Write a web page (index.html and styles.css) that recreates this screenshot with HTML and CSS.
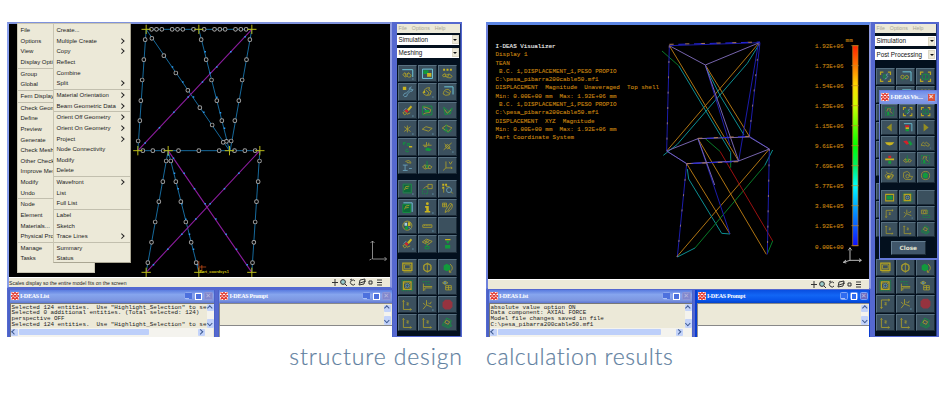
FILE: index.html
```html
<!DOCTYPE html>
<html lang="en">
<head>
<meta charset="utf-8">
<title>Structure design and calculation results</title>
<link rel="stylesheet" href="styles.css">
</head>
<body>
<svg class="defs" aria-hidden="true">
  <defs>
    <linearGradient id="scale" x1="0" y1="0" x2="0" y2="1">
      <stop offset="0" stop-color="#f20"/><stop offset=".1" stop-color="#f70"/><stop offset=".2" stop-color="#fd0"/><stop offset=".3" stop-color="#cf0"/>
      <stop offset=".5" stop-color="#0f0"/><stop offset=".6" stop-color="#0e6"/><stop offset=".7" stop-color="#0ff"/>
      <stop offset=".8" stop-color="#0af"/><stop offset="1" stop-color="#11f"/>
    </linearGradient>
  </defs>
  <g>
    <symbol id="blob" viewBox="0 0 57 54"><path class="y" d="M12 28l7-6 6 5 7-5 6 5 6 4-2 6-7 1-6-5-6 4-6-2-6 1z"/><path class="n" d="M47 46h3"/></symbol>
    <symbol id="blob-c" viewBox="0 0 57 54"><path class="y" d="M12 30l7-6 6 5 7-5 6 5 3 4-2 6-7 0-6-3-6 3zM19 24l4 12M32 24l-6 12"/><path class="c" d="M10 13h37v26"/><path class="n" d="M45 46h5"/></symbol>
    <symbol id="block" viewBox="0 0 57 54"><path class="c" d="M11 11h35v33H11z"/><path class="fg" d="M14 15h18v13H14z"/><path class="fy" d="M27 25h15v13H27z"/></symbol>
    <symbol id="dots" viewBox="0 0 57 54"><path class="fy" d="M13 10h7v7h-7zM25 10h7v7h-7zM37 10h7v7h-7z"/><path class="y" d="M11 32l8-5 7 5 8-4 11 8-5 6-9-1-9-4-8 1zM19 28l5 11M34 28l-5 11"/></symbol>
    <symbol id="wrench" viewBox="0 0 57 54"><path class="fy" d="M12 10h12v11H12z"/><path class="n" d="M43 10l-8 4 0 8-11 10-6 1-4 7 5 5 7-2 2-7 10-10 7-1 3-7"/><path class="n" d="M40 14v6h6"/></symbol>
    <symbol id="bend" viewBox="0 0 57 54"><path class="y" d="M16 27c2-11 9-14 20-14l-3 8 9 5-5 13-14 1-9-6zM22 21l12 10-6 9"/><path class="fy" d="M10 30l9-7 2 9z"/><path class="n" d="M45 46h5"/></symbol>
    <symbol id="bend-c" viewBox="0 0 57 54"><path class="c" d="M17 10h31v27"/><path class="y" d="M15 29c2-8 7-10 16-10l8 6-4 13-13 2-9-5zM21 25l14 8"/></symbol>
    <symbol id="pencil" viewBox="0 0 57 54"><path class="fy" d="M40 9l5 5-12 14-6-5z"/><path class="fr" d="M23 21l9 8-5 6-9-7z"/><path class="y" d="M12 34l8-4 6 7-8 5zM27 40l11-5"/><path class="n" d="M15 27l9-9M45 46h5"/></symbol>
    <symbol id="sheet" viewBox="0 0 57 54"><path class="g" d="M11 11h33v31H11z"/><path class="y" d="M14 14l12 2 14 7-3 10-14 2-9 4"/><path class="fg" d="M18 25h16v8H18z"/><path class="n" d="M14 18l10 6"/></symbol>
    <symbol id="tri" viewBox="0 0 57 54"><path class="g" d="M15 15l5 26 25-23-7 20-18 3M15 15l18 14 5 9"/><path class="y" d="M18 23l10 13 13-12"/></symbol>
    <symbol id="star" viewBox="0 0 57 54"><path class="y" d="M28 16v24M17 20l22 17M39 20L17 37"/><path class="n" d="M45 46h5"/></symbol>
    <symbol id="diamond" viewBox="0 0 57 54"><path class="y" d="M10 29l13-9 22 6-13 10z"/><path class="n" d="M45 46h5"/></symbol>
    <symbol id="diamond-g" viewBox="0 0 57 54"><path class="y" d="M10 25l14-10 20 9-13 13z"/><path class="g" d="M24 12v20M19 27l6 7 6-7M14 31l16 10 13-8"/></symbol>
    <symbol id="tags" viewBox="0 0 57 54"><path class="g" d="M14 22V12h8M14 17h7M28 16h8v7h-8zM30 36c-7-3-12 8-4 9h5v-4"/><path class="fy" d="M34 25h11v5H34z"/></symbol>
    <symbol id="level" viewBox="0 0 57 54"><path class="y" d="M12 22h31M16 27h11M25 11v11M33 13v9"/><path class="fg" d="M21 34l9-4 14 7-9 6-13-2z"/></symbol>
    <symbol id="cross" viewBox="0 0 57 54"><path class="y" d="M15 38l28-24M18 17l22 21M20 25l9-6 9 10-9 6z"/><path class="n" d="M45 46h5"/></symbol>
    <symbol id="beam" viewBox="0 0 57 54"><path class="y" d="M21 12l12-3 9 7M26 16l15 2"/><path class="n" d="M12 25h17M20 25v19M12 44h17M34 37h10"/></symbol>
    <symbol id="blob-g" viewBox="0 0 57 54"><path class="y" d="M11 32l8-8 8 5 7-4 10 6-5 7-10-2-9 3zM19 24l4 13M34 26l-4 10"/><path class="g" d="M27 10v24M22 26l5 7 5-7"/></symbol>
    <symbol id="axes" viewBox="0 0 57 54"><path class="y" d="M23 12v23M13 44l10-9h22M34 13l5 9 6-10M40 31l5 4-4 4"/></symbol>
    <symbol id="gmesh" viewBox="0 0 57 54"><path class="g" d="M13 11h29v31H13z"/><path class="gd" d="M16 14h23v25H16z"/><path class="y" d="M18 32l4-12 13-2M22 27l10-2"/><path class="n" d="M45 46h5"/></symbol>
    <symbol id="gmesh-c" viewBox="0 0 57 54"><path class="gd" d="M12 15h28v29H12z"/><path class="g" d="M12 15h28v29H12z"/><path class="y" d="M18 33l5-12 12-2M22 28l11-2"/><path class="c" d="M14 10h31v32"/></symbol>
    <symbol id="extract" viewBox="0 0 57 54"><path class="y" d="M30 12h15v15H30zM15 27l8-8h6"/><path class="g" stroke-dasharray="4 3" d="M11 30h18v15H11z"/><path class="n" d="M45 46h5"/></symbol>
    <symbol id="lens" viewBox="0 0 57 54"><path class="fy" d="M10 10h7v7h-7zM20 10h7v7h-7zM10 20h7v7h-7z"/><path class="y" d="M15 27v14"/><circle class="n" cx="34" cy="32" r="9"/><path class="y" d="M23 20h13M41 38l6 6"/></symbol>
    <symbol id="info" viewBox="0 0 57 54"><circle class="fy" cx="28" cy="13" r="5"/><path class="fy" d="M20 21h13v18h5v5H19v-5h5V27h-4z"/><path class="n" d="M45 46h5"/></symbol>
    <symbol id="note" viewBox="0 0 57 54"><path class="y" d="M11 11h14v13H11zM18 11v13M11 17h14M44 14L29 39l-9 5 3-10 14-22zM44 14c6 11-5 21-13 28"/></symbol>
    <symbol id="palette" viewBox="0 0 57 54"><circle class="y" cx="28" cy="27" r="16"/><path class="fn" d="M18 17h9v10h-9z"/><path class="fy" d="M30 15h9v13h-9z"/><path class="fg" d="M20 31l10-4v14H20z"/><path class="n" d="M32 31l9 9"/></symbol>
    <symbol id="ruler" viewBox="0 0 57 54"><path class="y" d="M12 24h32v9H12zM18 24v4M24 24v4M30 24v4M37 24v4"/><path class="n" d="M45 46h5"/></symbol>
    <symbol id="blank" viewBox="0 0 57 54"></symbol>
    <symbol id="fan" viewBox="0 0 57 54"><path class="y" d="M10 21l15-10 20 8-16 12zM17 17l16 8M24 25l12-9M29 12l-8 12"/><path class="g" d="M25 27v10M20 37h14v8H20z"/></symbol>
    <symbol id="funnel" viewBox="0 0 57 54"><path class="fy" d="M20 11h19v4H20z"/><path class="fg" d="M23 18h13l-6 10zM20 32h18v12H20z"/></symbol>
    <symbol id="monitor" viewBox="0 0 57 54"><path class="y2" d="M12 11h32v26H12z"/><path class="y" d="M18 17h20v14H18zM14 42h29"/></symbol>
    <symbol id="cube" viewBox="0 0 57 54"><circle class="y" cx="28" cy="27" r="13"/><path class="y" d="M28 11l13 7v17l-13 8-13-8V18zM28 11v32"/></symbol>
    <symbol id="rotate" viewBox="0 0 57 54"><path class="fg" d="M15 19l11-6 12 6v15l-12 6-11-6z"/><path class="y" d="M37 14c12 9 11 22-2 28M35 36v7h7"/></symbol>
    <symbol id="fit" viewBox="0 0 57 54"><path class="g" stroke-dasharray="4 3" d="M9 9h38v36H9z"/><path class="y2" d="M14 14h27v26H14z"/><circle class="n" cx="28" cy="27" r="6"/><path class="y" d="M15 15l8 8M40 15l-7 7M15 39l8-7M40 39l-7-7"/></symbol>
    <symbol id="corner" viewBox="0 0 57 54"><path class="g" stroke-dasharray="6 3" d="M11 13h28M22 21l18 3"/><path class="y" d="M14 20v26M19 35v9M14 30h31M19 35h26"/></symbol>
    <symbol id="eyegrid" viewBox="0 0 57 54"><path class="y" d="M11 17l9-6 10 6-10 6zM22 27h20v15H22zM32 27v15M22 34h20"/><circle class="n" cx="20" cy="17" r="3"/></symbol>
    <symbol id="axis" viewBox="0 0 57 54"><path class="y" d="M14 12v32h28M11 16l3-4 4 4M38 40l4 4-4 4M25 21h7l-6 7h7"/></symbol>
    <symbol id="axis-t" viewBox="0 0 57 54"><path class="y" d="M14 44V14h29M11 39l3 5 4-5M38 11l5 3-5 4M25 24h7l-6 7h7"/></symbol>
    <symbol id="axis3" viewBox="0 0 57 54"><path class="y" d="M25 11v17l19 8M25 28L13 43M13 21l7 7M37 25l5-8M31 20l5 5"/><path class="n" d="M45 46h5"/></symbol>
    <symbol id="stop" viewBox="0 0 57 54"><path fill="#96333f" d="M20 10h17l9 9v16l-9 9H20l-9-9V19z"/></symbol>
    <symbol id="stack" viewBox="0 0 57 54"><path class="g" d="M10 36l9-15 7-10 16 9-5 14 7 3-12 9zM14 31l20 10 3-8"/><path class="y" d="M24 18l12 6-5 9-12-6z"/></symbol>
    <symbol id="frame" viewBox="0 0 57 54"><path class="y2" d="M11 21V11h10M37 11h9v10M46 34v10h-9M21 44H11V34"/><path class="g" d="M21 21h8v11h-8z"/><path class="n" d="M38 18c-10-2-8 8 0 8M26 36l9-6"/></symbol>
    <symbol id="frame-g" viewBox="0 0 57 54"><path class="y2" d="M11 21V11h10M37 11h9v10M46 34v10h-9M21 44H11V34"/><path class="g" d="M17 22l12-5 12 5v12l-12 4-12-5zM29 18v19"/></symbol>
    <symbol id="chain" viewBox="0 0 57 54"><path class="c" d="M18 10h30v33"/><circle class="y" cx="18" cy="28" r="6"/><circle class="y" cx="33" cy="29" r="6"/><path class="g" d="M18 40l15-15"/></symbol>
    <symbol id="plot" viewBox="0 0 57 54"><path class="g" stroke-dasharray="7 3" d="M11 10h34v34H11z"/><path class="y" d="M18 16h15l-4 9 10 10M20 17l-3 10"/><path class="fg" d="M18 28h9v14h-9z"/></symbol>
    <symbol id="prev" viewBox="0 0 57 54"><path fill="#948e22" d="M37 10v34L16 27z"/></symbol>
    <symbol id="next" viewBox="0 0 57 54"><path fill="#948e22" d="M20 10v34l21-17z"/></symbol>
    <symbol id="legend" viewBox="0 0 57 54"><path class="c" d="M13 11h33v32"/><path class="fr" d="M18 18h17v8H18z"/><path class="fy" d="M20 26h14v8H20z"/><path class="fg" d="M20 34h14v9H20z"/></symbol>
    <symbol id="wing" viewBox="0 0 57 54"><path class="fy" d="M9 22h39l-9 10-11 3-12-4z"/></symbol>
    <symbol id="slab" viewBox="0 0 57 54"><path class="fr" d="M10 18l14-3 13 12-12 5z"/><path class="fg" d="M29 20l10-3 10 13-10 6z"/></symbol>
    <symbol id="bars" viewBox="0 0 57 54"><path class="fr" d="M23 11h12v10H23z"/><path class="fy" d="M10 23h37v7H10z"/><path class="fg" d="M23 32h12v13H23z"/></symbol>
    <symbol id="eyes" viewBox="0 0 57 54"><path class="y" d="M9 27l12-9 24 7-9 16H18zM21 18l-8-7M34 20l7-9"/><circle class="fy" cx="24" cy="32" r="6"/><circle class="y" cx="37" cy="29" r="5"/></symbol>
    <symbol id="boxes" viewBox="0 0 57 54"><path class="y" d="M12 15l15-5 10 8v12l12 1-6 13-24-1-8-9z"/><circle class="y" cx="28" cy="30" r="7"/></symbol>
    <symbol id="disc" viewBox="0 0 57 54"><circle class="y" cx="28" cy="27" r="17"/><path class="fg" d="M18 19l10-6 11 9-3 15-13 2-7-9z"/></symbol>
    <symbol id="screen" viewBox="0 0 57 54"><path class="y2" d="M12 14h33v27H12z"/><path class="fg" d="M17 20h23v15H17z"/></symbol>
    <symbol id="copyg" viewBox="0 0 57 54"><path class="y" d="M11 13h24v15H11z"/><circle class="y" cx="24" cy="21" r="6"/><path class="g" stroke-dasharray="5 3" d="M17 35h29v9H17zM38 12v20"/></symbol>
    <symbol id="logo" viewBox="0 0 8 8"><path fill="#fff" d="M0 0h8v8H0z"/><path fill="none" stroke="#e23b30" stroke-width="1.3" d="M.5.5l7 7M7.5.5l-7 7M4 .5L.5 4 4 7.5 7.5 4z"/></symbol>
    <symbol id="viewtools" viewBox="0 0 52 9"><g fill="none" stroke="#333" stroke-width="1"><path d="M1 4.5h6M4 1v7"/><circle cx="12" cy="4" r="2.4" fill="#9cc"/><path d="M14 6l2 2M24 3a2.5 2.5 0 1 0 0 3M19 2l2-1M28 7l1-5 5-1-1 5zM29 5l6-2M38 3h3v3h-3zM46 2h5M46 4.5h5M46 7h5"/></g></symbol>
  </g>
</svg>

<main class="page">
  <figure class="shot">
    <div class="desktop design">
      <section class="win main">
        <svg class="view" viewBox="9.5 24 380.5 253">
          <g transform="translate(130 15) scale(.33333)" fill="none">
            <path class="member" d="M50 43H367M50 43L25 407M50 43L300 407M208 43L300 407M367 43L302 407M25 407H391M116 407L50 772M116 407L208 772M391 407L367 772"/>
            <path class="brace" d="M367 43L25 407M116 407L367 772M391 407L50 772"/>
            <path class="dot" d="M129 156h0M160 201h0M192 246h0M223 292h0M227 110h0M242 174h0M262 247h0M273 293h0M285 340h0M347 65h0M304 110h0M262 156h0M219 201h0M176 246h0M133 292h0M90 338h0M47 384h0M164 475h0M195 521h0M227 566h0M259 612h0M290 658h0M321 703h0M353 749h0M132 430h0M285 521h0M328 475h0M242 566h0M199 612h0M157 658h0M115 703h0M72 749h0M135 475h0M146 521h0M157 566h0M169 613h0M180 658h0M192 703h0M116 420h0M204 749h0"/>
            <path class="ring" d="M66 43h0M81 43h0M97 43h0M128 43h0M144 43h0M160 43h0M192 43h0M224 43h0M255 43h0M271 43h0M287 43h0M318 43h0M334 43h0M350 43h0M47 74h0M43 134h0M38 195h0M34 257h0M31 317h0M26 378h0M67 70h0M103 122h0M139 174h0M175 226h0M211 278h0M248 330h0M281 382h0M215 74h0M230 134h0M246 195h0M262 257h0M277 317h0M291 379h0M361 74h0M351 134h0M338 195h0M328 257h0M316 317h0M305 378h0M40 407h0M70 407h0M101 407h0M147 407h0M208 407h0M269 407h0M315 407h0M346 407h0M377 407h0M110 438h0M100 500h0M88 560h0M77 621h0M66 682h0M55 743h0M124 438h0M139 500h0M154 560h0M169 621h0M185 682h0M200 743h0M390 438h0M386 500h0M381 560h0M377 621h0M373 682h0M369 743h0"/>
            <path class="hole" d="M66 43h0M81 43h0M97 43h0M128 43h0M144 43h0M160 43h0M192 43h0M224 43h0M255 43h0M271 43h0M287 43h0M318 43h0M334 43h0M350 43h0M47 74h0M43 134h0M38 195h0M34 257h0M31 317h0M26 378h0M67 70h0M103 122h0M139 174h0M175 226h0M211 278h0M248 330h0M281 382h0M215 74h0M230 134h0M246 195h0M262 257h0M277 317h0M291 379h0M361 74h0M351 134h0M338 195h0M328 257h0M316 317h0M305 378h0M40 407h0M70 407h0M101 407h0M147 407h0M208 407h0M269 407h0M315 407h0M346 407h0M377 407h0M110 438h0M100 500h0M88 560h0M77 621h0M66 682h0M55 743h0M124 438h0M139 500h0M154 560h0M169 621h0M185 682h0M200 743h0M390 438h0M386 500h0M381 560h0M377 621h0M373 682h0M369 743h0"/>
            <path class="node" d="M36 43h28M50 29v28M194 43h28M208 29v28M353 43h28M367 29v28M11 407h28M25 393v28M102 407h28M116 393v28M286 407h28M300 393v28M377 407h28M391 393v28M36 772h28M50 758v28M194 772h28M208 758v28M353 772h28M367 758v28"/>
            <path stroke="#e2571b" stroke-width="2" d="M208 738v30M208 756h22M217 750v16"/>
            <text x="210" y="773" class="cs" textLength="88" lengthAdjust="spacingAndGlyphs">Part_coordsys1</text>
          </g>
          <path fill="none" stroke="#aaa" stroke-width=".8" d="M373 241v18h14M371 243l2-2 2 2M385 257l2 2-2 2M372 259l-2 1"/>
        </svg>
        <ul class="menu first">
          <li>File<li>Options<li>View<li>Display Opti<li class="sep">Group<li>Global<li class="sep">Fem Display<li class="sep">Check Geom<li>Define<li>Preview<li>Generate<li>Check Mesh<li>Other Check<li>Improve Mes<li>Modify<li>Undo<li class="sep">Node<li>Element<li>Materials...<li>Physical Pro<li class="sep">Manage<li>Tasks
        </ul>
        <ul class="menu second">
          <li>Create...<li class="more">Multiple Create<li class="more">Copy<li>Reflect<li>Combine<li class="more">Split<li class="sep more">Material Orientation<li class="more">Beam Geometric Data<li class="sep more">Orient Off Geometry<li class="more">Orient On Geometry<li class="more">Project<li>Node Connectivity<li>Modify<li>Delete<li class="sep more">Wavefront<li>List<li>Full List<li class="sep">Label<li>Sketch<li class="more">Trace Lines<li class="sep">Summary<li>Status
        </ul>
        <div class="status"><span>Scales display so the entire model fits on the screen</span><svg class="vt"><use href="#viewtools"/></svg></div>
      </section>

      <section class="win list">
        <header class="title"><svg class="logo"><use href="#logo"/></svg><b>I-DEAS List</b><i class="btn min"></i><i class="btn max"></i><i class="btn close off">✕</i></header>
        <div class="log"><pre>Selected 124 entities.  Use "Highlight_Selection" to se
Selected 0 additional entities. (Total selected: 124)
perspective OFF
Selected 124 entities.  Use "Highlight_Selection" to se</pre><div class="vbar"><i class="up"></i><i class="down"></i></div></div>
        <div class="hbar"><i class="lt"></i><span class="thumb"></span><i class="rt"></i></div>
      </section>

      <section class="win prompt">
        <header class="title"><svg class="logo"><use href="#logo"/></svg><b>I-DEAS Prompt</b><i class="btn min"></i><i class="btn max"></i><i class="btn close off">✕</i></header>
        <div class="out"><div class="vbar"><i class="up"></i><i class="down"></i></div></div>
        <div class="in"></div>
      </section>

      <section class="win panel">
        <nav class="bar"><span>File</span><span>Options</span><span>Help</span></nav>
        <div class="combo">Simulation<i></i></div>
        <div class="combo">Meshing<i></i></div>
        <div class="tools g1">
          <svg><use href="#blob-c"/></svg><svg><use href="#block"/></svg><svg><use href="#dots"/></svg>
          <svg><use href="#wrench"/></svg><svg><use href="#bend"/></svg><svg><use href="#bend-c"/></svg>
          <svg><use href="#pencil"/></svg><svg><use href="#sheet"/></svg><svg><use href="#tri"/></svg>
          <svg><use href="#star"/></svg><svg><use href="#diamond"/></svg><svg><use href="#diamond-g"/></svg>
          <svg><use href="#tags"/></svg><svg><use href="#level"/></svg><svg><use href="#cross"/></svg>
          <svg><use href="#beam"/></svg><svg><use href="#blob-g"/></svg><svg><use href="#axes"/></svg>
        </div>
        <div class="tools g2">
          <svg><use href="#gmesh"/></svg><svg><use href="#extract"/></svg><svg><use href="#lens"/></svg>
          <svg><use href="#gmesh-c"/></svg><svg><use href="#info"/></svg><svg><use href="#note"/></svg>
          <svg><use href="#palette"/></svg><svg><use href="#ruler"/></svg><svg><use href="#blank"/></svg>
          <svg><use href="#pencil"/></svg><svg><use href="#fan"/></svg><svg><use href="#funnel"/></svg>
        </div>
        <div class="tools g2">
          <svg><use href="#monitor"/></svg><svg><use href="#cube"/></svg><svg><use href="#rotate"/></svg>
          <svg><use href="#fit"/></svg><svg><use href="#corner"/></svg><svg><use href="#eyegrid"/></svg>
          <svg><use href="#axis"/></svg><svg><use href="#axis3"/></svg><svg><use href="#stop"/></svg>
          <svg><use href="#axis"/></svg><svg><use href="#axis"/></svg><svg><use href="#stack"/></svg>
        </div>
      </section>
    </div>
    <figcaption><span class="cap-a">structure design</span></figcaption>
  </figure>

  <figure class="shot">
    <div class="desktop results">
      <section class="win main">
        <svg class="view" viewBox="488 25 381 253.5">
          <g class="report">
            <text class="head" x="495.5" y="47.7" textLength="60">I-DEAS Visualizer</text>
            <text x="495.5" y="56.3" textLength="32">Display 1</text>
            <text x="495.5" y="64.8" textLength="14.2">TEAN</text>
            <text x="499" y="72.8" textLength="117.5">B.C. 1,DISPLACEMENT_1,PESO PROPIO</text>
            <text x="495.5" y="81.2" textLength="103">C:\pesa_pibarra200cable50.mf1</text>
            <text x="495.5" y="89.4" textLength="163.5">DISPLACEMENT  Magnitude  Unaveraged  Top shell</text>
            <text x="495.5" y="97.8" textLength="121">Min: 0.00E+00 mm  Max: 1.92E+06 mm</text>
            <text x="499" y="106" textLength="117.5">B.C. 1,DISPLACEMENT_1,PESO PROPIO</text>
            <text x="495.5" y="114.4" textLength="103">C:\pesa_pibarra200cable50.mf1</text>
            <text x="495.5" y="122.8" textLength="99">DISPLACEMENT  XYZ  Magnitude</text>
            <text x="495.5" y="130.8" textLength="121">Min: 0.00E+00 mm  Max: 1.92E+06 mm</text>
            <text x="495.5" y="139" textLength="78.5">Part Coordinate System</text>
          </g>
          <g class="report">
            <text x="845.5" y="41.5" textLength="7.2">mm</text>
            <text x="815" y="48" textLength="28.5">1.92E+06</text><text x="815" y="68.2" textLength="28.5">1.73E+06</text>
            <text x="815" y="88.4" textLength="28.5">1.54E+06</text><text x="815" y="108" textLength="28.5">1.35E+06</text>
            <text x="815" y="128.3" textLength="28.5">1.15E+06</text><text x="815" y="148.2" textLength="28.5">9.61E+05</text>
            <text x="815" y="168.2" textLength="28.5">7.69E+05</text><text x="815" y="188.3" textLength="28.5">5.77E+05</text>
            <text x="815" y="208.3" textLength="28.5">3.84E+05</text><text x="815" y="228.3" textLength="28.5">1.92E+05</text>
            <text x="815" y="248.5" textLength="28.5">0.00E+00</text>
          </g>
          <g transform="translate(640 15) scale(.33333)" fill="none" stroke-width="3">
            <path fill="url(#scale)" stroke="#b77a1c" stroke-width="2" d="M638 92h16v600h-16z"/>
            <path stroke="#c88b22" stroke-width="2" d="M634 92h22M634 152h22M634 212h22M634 272h22M634 332h22M634 392h22M634 452h22M634 512h22M634 572h22M634 632h22M634 692h22"/>
            <path stroke="#b07412" d="M88 92L296 438M355 86L80 408M196 150L328 364M140 446L270 657M174 371L379 718M388 402L110 726"/>
            <path stroke="#0d8f92" d="M116 152L272 412V440M355 92L322 145L112 388L70 421M198 158L242 245L312 360M142 462L146 492L245 655L270 657M165 699L112 726M398 405L374 452"/>
            <path stroke="#087a28" d="M66 108L116 152M272 430V458M196 371L240 409M374 452L165 699M398 678L383 714"/>
            <path stroke="#9c1010" d="M240 409L398 678"/>
            <path stroke="#1c1cac" d="M88 92L360 83L328 364L388 402L382 718M88 92L80 408L140 446L296 438L355 86M196 150L270 390M174 371L270 657M140 446L112 726"/>
            <path stroke="#7664ae" d="M88 92L196 150L358 83M196 150L296 438M80 408L174 371L328 366L388 402L296 438L140 446L80 408M174 371L224 510"/>
            <path stroke="#b07c55" stroke-dasharray="13 34" d="M88 88L360 81M174 370L328 364M140 446L296 440"/>
            <path stroke="#8a6a80" stroke-dasharray="6 40" d="M88 92L80 408M357 86L328 364M388 402L382 718M140 446L112 726"/>
            <path stroke="#2424d8" stroke-dasharray="22 25" d="M115 88L360 81M200 370L328 364M160 445L296 440"/>
            <path stroke="#bbb" d="M630 704v32h34M630 736l-20 6M610 742l8-7M610 742l9 2M625 706l5-8 5 8M657 731l7 5-7 5"/>
          </g>
        </svg>
        <div class="status"><span></span><svg class="vt"><use href="#viewtools"/></svg></div>
      </section>

      <section class="win list">
        <header class="title"><svg class="logo"><use href="#logo"/></svg><b>I-DEAS List</b><i class="btn min"></i><i class="btn max"></i><i class="btn close off">✕</i></header>
        <div class="log"><pre>absolute value option ON
Data component: AXIAL FORCE
Model file changes saved in file
C:\pesa_pibarra200cable50.mf1</pre><div class="vbar"><i class="up"></i><i class="down"></i></div></div>
        <div class="hbar"><i class="lt"></i><span class="thumb wide"></span><i class="rt"></i></div>
      </section>

      <section class="win prompt active">
        <header class="title"><svg class="logo"><use href="#logo"/></svg><b>I-DEAS Prompt</b><i class="btn min"></i><i class="btn max"></i><i class="btn close off">✕</i></header>
        <div class="out"><div class="vbar"><i class="up"></i><i class="down"></i></div></div>
        <div class="in"></div>
      </section>

      <section class="win panel">
        <nav class="bar"><span>File</span><span>Options</span><span>Help</span></nav>
        <div class="combo">Simulation<i></i></div>
        <div class="combo">Post Processing<i></i></div>
        <div class="tools g1">
          <svg><use href="#frame"/></svg><svg><use href="#chain"/></svg><svg><use href="#frame-g"/></svg>
          <svg><use href="#blank"/></svg><svg><use href="#bend-c"/></svg><svg><use href="#dots"/></svg>
          <svg><use href="#blank"/></svg><svg><use href="#blank"/></svg><svg><use href="#blank"/></svg>
          <svg><use href="#blank"/></svg><svg><use href="#blank"/></svg><svg><use href="#blank"/></svg>
          <svg><use href="#blank"/></svg><svg><use href="#blank"/></svg><svg><use href="#blank"/></svg>
          <svg><use href="#blank"/></svg><svg><use href="#blank"/></svg><svg><use href="#blank"/></svg>
        </div>
        <div class="tools g2 mid">
          <svg><use href="#blank"/></svg><svg><use href="#blank"/></svg><svg><use href="#blank"/></svg>
          <svg><use href="#blank"/></svg><svg><use href="#blank"/></svg><svg><use href="#blank"/></svg>
          <svg><use href="#blank"/></svg><svg><use href="#blank"/></svg><svg><use href="#blank"/></svg>
        </div>
        <div class="tools g2 low">
          <svg><use href="#monitor"/></svg><svg><use href="#cube"/></svg><svg><use href="#rotate"/></svg>
          <svg><use href="#fit"/></svg><svg><use href="#corner"/></svg><svg><use href="#eyegrid"/></svg>
          <svg><use href="#axis-t"/></svg><svg><use href="#axis3"/></svg><svg><use href="#stop"/></svg>
          <svg><use href="#axis"/></svg><svg><use href="#axis"/></svg><svg><use href="#stack"/></svg>
        </div>
      </section>

      <section class="win dialog">
        <header class="title"><svg class="logo"><use href="#logo"/></svg><b>I-DEAS Vis....</b><i class="btn close">✕</i></header>
        <div class="tools small">
          <svg><use href="#plot"/></svg><svg><use href="#frame"/></svg><svg><use href="#frame-g"/></svg>
          <svg><use href="#prev"/></svg><svg><use href="#legend"/></svg><svg><use href="#next"/></svg>
          <svg><use href="#wing"/></svg><svg><use href="#slab"/></svg><svg><use href="#blob"/></svg>
          <svg><use href="#bars"/></svg><svg><use href="#blob-g"/></svg><svg><use href="#plot"/></svg>
          <svg><use href="#eyes"/></svg><svg><use href="#boxes"/></svg><svg><use href="#disc"/></svg>
        </div>
        <div class="tools small second-group">
          <svg><use href="#screen"/></svg><svg><use href="#fit"/></svg><svg><use href="#blank"/></svg>
          <svg><use href="#axis-t"/></svg><svg><use href="#axis3"/></svg><svg><use href="#copyg"/></svg>
          <svg><use href="#axis"/></svg><svg><use href="#axis"/></svg><svg><use href="#stack"/></svg>
        </div>
        <button class="done">Close</button>
      </section>
    </div>
    <figcaption><span class="cap-b">calculation results</span></figcaption>
  </figure>
</main>
</body>
</html>
```
FILE: styles.css
```css
* { box-sizing: border-box; }
body { margin: 0; background: #fff; font-family: "Liberation Sans", sans-serif; width: 950px; height: 400px; overflow: hidden; }
.defs { position: absolute; width: 0; height: 0; }
.page { display: flex; gap: 24px; padding: 22px 0 0 7px; }
.shot { margin: 0; }
.desktop { position: relative; width: 455px; height: 315px; background: #5568cf; overflow: hidden; }
.results { width: 453px; }

/* toolbar icon strokes and fills */
.y { stroke: #aa9e2a; } .y2 { stroke: #b8a51e; stroke-width: 4.5; }
.g { stroke: #12933f; } .c { stroke: #6cc4d6; stroke-width: 3.5; } .n { stroke: #6aa3bd; }
.gd { fill: #0c6b3a; } .fg { fill: #129a3c; } .fy { fill: #c9b41f; } .fr { fill: #d3202a; } .fn { fill: #a9d3dd; }

.win { position: absolute; display: flex; flex-direction: column; }
.main { left: 0; top: 0; width: 385px; height: 266px; border-left: 2.5px solid #8aa0ee; border-top: 2px solid #7f92dc; border-right: 2px solid #8f9ae0; border-bottom: 1.5px solid #5069d2; background: #ece9d8; }
.results .main { border-left: 2px solid #6f82dc; border-top: 3px solid #5c86e4; width: 384.5px; height: 267px; }
.view { display: block; width: 380.5px; height: 253px; background: #000; flex: none; }
.results .view { width: 381px; height: 253.5px; }
.member { stroke: #16699c; stroke-width: 3; }
.brace { stroke: #8a1c9c; stroke-width: 3.4; }
.dot { stroke: #2b9cf4; stroke-width: 4.5; stroke-linecap: square; }
.ring { stroke: #a4a4a4; stroke-width: 14; stroke-linecap: round; }
.hole { stroke: #000; stroke-width: 8.5; stroke-linecap: round; }
.node { stroke: #b9b916; stroke-width: 3; }
.cs { font: bold 11px "Liberation Sans", sans-serif; fill: #d0c40c; }
.report text { font: 5.92px "Liberation Mono", monospace; fill: #c4820f; stroke: #c4820f; stroke-width: .12; white-space: pre; }
.report .head { fill: #eee; stroke: #eee; }

.status { flex: 1; display: flex; align-items: center; justify-content: space-between; padding: 0 7px 0 0; background: #ece9d8; border-top: 1px solid #fff; font-size: 5.1px; color: #222; white-space: nowrap; }
.vt { width: 52px; height: 9px; }

.menu { position: absolute; margin: 0; padding: 1.2px 0 0; list-style: none; background: #ece9d8; border: .5px solid #c9c5b2; font-size: 6px; color: #222; top: -1px; overflow: hidden; }
.menu li { height: 10.65px; line-height: 10.65px; padding-left: 3px; white-space: nowrap; position: relative; }
.menu .sep { border-top: 1px solid #c2bfae; height: 11.62px; }
.first { left: 7.5px; width: 78px; height: 250px; }
.second { left: 43.5px; width: 78px; height: 240px; border-right: 1px solid #aaa693; border-bottom: 1px solid #aaa693; }
.more::after { content: ""; position: absolute; right: 6px; top: 3px; width: 2.5px; height: 2.5px; border: solid #222; border-width: .8px .8px 0 0; transform: rotate(45deg); }

.title { height: 13px; flex: none; display: flex; align-items: center; gap: 1.5px; padding: 0 1px 0 1px; color: #fff; background: linear-gradient(#5a7ce0, #86a5ee 35%, #7c96e0 80%, #5e76d2); font: 6px "Liberation Serif", serif; }
.title b { flex: 1; white-space: nowrap; letter-spacing: -.25px; }
.logo { width: 8px; height: 8px; }
.btn { width: 8.5px; height: 8.5px; border: .7px solid #8ba5ee; border-radius: 1.5px; background: #4d71de; display: flex; align-items: center; justify-content: center; font: bold 7px/1 "DejaVu Sans", sans-serif; }
.min::after { content: ""; width: 4px; height: 1px; background: #a9bff5; margin: 4px 2px 0 0; }
.max::after { content: ""; width: 5px; height: 5px; border: 1px solid #fff; border-top-width: 1.5px; }
.close { background: #d8503a; color: #fff; }
.off { background: #8187cd; color: #b7b9df; border-color: #9095d4; }

.list { left: 1px; top: 267.5px; width: 207px; height: 47.5px; padding: 0 1.5px .5px 1.5px; background: #4a62c8; }
.prompt { left: 210.5px; top: 267.5px; width: 175px; height: 47.5px; padding: 0 1px .5px 1.5px; background: #4a62c8; }
.results .list { left: 1px; width: 206px; }
.results .prompt { left: 209px; }
.active { background: #0a3cd0; }
.active .title { background: linear-gradient(#0a4ee0, #1266f5 40%, #0754ea 80%, #0342c8); }
.active .btn { border-color: #7ba2f8; background: #2f6cf0; }
.active .btn.off { background: #6a6bc0; }
.log { display: flex; height: 25px; margin-top: .3px; background: #ece9d8; border-top: 1px solid #777; border-left: 1px solid #777; overflow: hidden; }
.log pre { flex: 1; margin: 0; padding: .8px 0 0 1px; overflow: hidden; font: 5.92px/5.8px "Liberation Mono", monospace; color: #222; }
.vbar { width: 7px; display: flex; flex-direction: column; justify-content: space-between; background: #f4f3ee; }
.vbar i, .hbar i { width: 7px; height: 7px; flex: none; background: #c3d3fa; border-radius: 1px; display: flex; align-items: center; justify-content: center; }
.vbar .down { height: 9px; }
.vbar i::after, .hbar i::after { content: ""; width: 2.6px; height: 2.6px; border: solid #3f5b93; border-width: 1px 0 0 1px; }
.vbar .up::after { transform: rotate(45deg); } .vbar .down::after { transform: rotate(225deg); }
.hbar .lt::after { transform: rotate(-45deg); } .hbar .rt::after { transform: rotate(135deg); }
.hbar { display: flex; flex: 1; padding-right: 8px; background: #f4f3ee; border-left: 1px solid #777; border-right: 1px solid #ece9d8; align-items: center; }
.thumb { width: 130px; height: 6px; margin: 0 auto 0 1px; background: #bdcffa; border-radius: 1px; }
.wide { width: 163px; }
.out { display: flex; justify-content: flex-end; height: 23.5px; padding: 1px 1px 0 0; background: #ece9d8; border: 1px solid #888; border-width: 1px 0 1.3px 1px; }
.in { flex: 1; background: #fff; border-left: 1px solid #999; }

.panel { left: 389.5px; top: 1.5px; width: 64px; height: 312px; background: #03101e; border-right: 1px solid #29408e; }
.results .panel { left: 388.5px; width: 62.5px; }
.bar { height: 9px; flex: none; display: flex; gap: 5px; align-items: center; padding-left: 2px; background: #ece9d8; color: #aaa797; font-size: 5.2px; }
.combo { height: 10.5px; flex: none; margin: 2px .5px 0 .5px; padding-left: 1.5px; display: flex; align-items: center; justify-content: space-between; background: #fff; font-size: 6.3px; line-height: 10px; color: #111; white-space: nowrap; }
.combo + .combo { margin-top: 2.7px; }
.results .combo { margin-top: 3.3px; }
.results .combo + .combo { margin-top: 3px; }
.combo i { width: 7px; height: 9px; margin-right: .5px; background: #ece9d8; display: flex; align-items: center; justify-content: center; border: .5px solid #dcd8c5; }
.combo i::after { content: ""; border: 2px solid transparent; border-top: 2.5px solid #111; border-bottom: 0; }
.tools { display: grid; flex: none; grid-template-columns: repeat(3, 19px); gap: 1px; grid-auto-rows: 17.3px; margin-left: 1.5px; }
.tools svg { width: 100%; height: 100%; background: #3b505e; border: .7px solid; border-color: #587080 #1d2c38 #1d2c38 #587080; fill: none; stroke-width: 3; }
.g1 { margin-top: 7px; }
.results .g1 { margin-top: 7.8px; }
.g2 { margin-top: 6.5px; }
.results .tools { margin-left: 1px; }
.mid { height: 72px; }
.results .low { margin-top: 0; position: absolute; left: 0; bottom: 4.5px; }

.dialog { left: 393px; top: 67.5px; width: 59.5px; height: 170.5px; background: #03101e; border: 1.5px solid #6579d8; border-bottom-width: 2px; border-right-width: 2.5px; }
.dialog .title { height: 13.5px; background: linear-gradient(#6d8be8, #88a2ec 40%, #7890e0); }
.dialog .tools.small { grid-template-columns: repeat(3, 17.3px); grid-auto-rows: 15px; gap: 1.1px; margin: 0 0 0 .7px; }
.dialog .second-group.small { margin-top: 6.5px; }
.done { align-self: center; flex: none; width: 35px; height: 14px; margin: 4px 0 0; padding: 0; background: #40566a; border: .7px solid; border-color: #667f92 #1d2c38 #1d2c38 #667f92; color: #e3e3d0; font: bold 5.8px "DejaVu Sans", sans-serif; }

figcaption { height: 40px; font: 300 23px/39px Lato, sans-serif; color: #5f80a0; -webkit-text-stroke: .2px #5f80a0; white-space: nowrap; }
.design + figcaption { text-align: right; }
.cap-a { letter-spacing: .88px; margin-right: -.88px; }
.cap-b { letter-spacing: .6px; }
```
